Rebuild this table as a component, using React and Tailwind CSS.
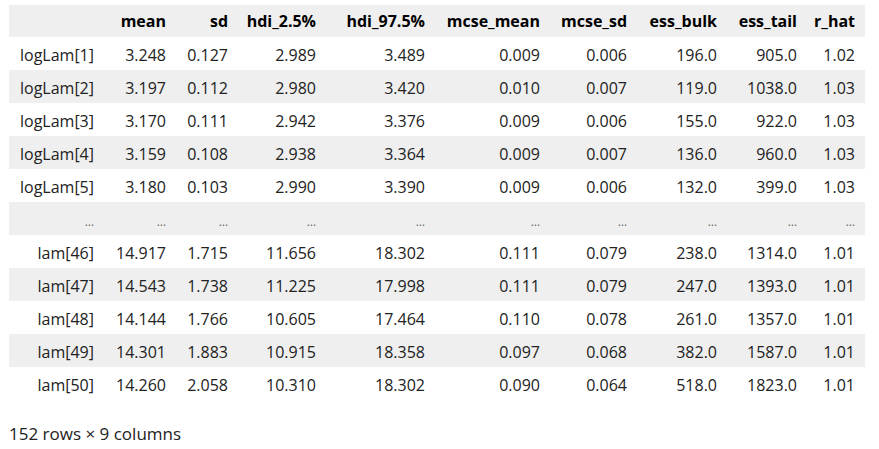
import React from "react";

const cols = ["mean", "sd", "hdi_2.5%", "hdi_97.5%", "mcse_mean", "mcse_sd", "ess_bulk", "ess_tail", "r_hat"];
const rows = [
  ["logLam[1]", "3.248", "0.127", "2.989", "3.489", "0.009", "0.006", "196.0", "905.0", "1.02"],
  ["logLam[2]", "3.197", "0.112", "2.980", "3.420", "0.010", "0.007", "119.0", "1038.0", "1.03"],
  ["logLam[3]", "3.170", "0.111", "2.942", "3.376", "0.009", "0.006", "155.0", "922.0", "1.03"],
  ["logLam[4]", "3.159", "0.108", "2.938", "3.364", "0.009", "0.007", "136.0", "960.0", "1.03"],
  ["logLam[5]", "3.180", "0.103", "2.990", "3.390", "0.009", "0.006", "132.0", "399.0", "1.03"],
  ["...", "...", "...", "...", "...", "...", "...", "...", "...", "..."],
  ["lam[46]", "14.917", "1.715", "11.656", "18.302", "0.111", "0.079", "238.0", "1314.0", "1.01"],
  ["lam[47]", "14.543", "1.738", "11.225", "17.998", "0.111", "0.079", "247.0", "1393.0", "1.01"],
  ["lam[48]", "14.144", "1.766", "10.605", "17.464", "0.110", "0.078", "261.0", "1357.0", "1.01"],
  ["lam[49]", "14.301", "1.883", "10.915", "18.358", "0.097", "0.068", "382.0", "1587.0", "1.01"],
  ["lam[50]", "14.260", "2.058", "10.310", "18.302", "0.090", "0.064", "518.0", "1823.0", "1.01"],
];

export default function App() {
  return (
    <div
      className="w-[879px] h-[449px] bg-white text-[#222] pt-[5px] pl-[9px]"
      style={{ fontFamily: '"Open Sans", "Noto Sans", sans-serif' }}
    >
      <table className="table-fixed border-collapse w-[856px] text-[16px]">
        <colgroup>
          <col className="w-[95px]" />
          <col className="w-[72px]" />
          <col className="w-[62px]" />
          <col className="w-[88px]" />
          <col className="w-[109px]" />
          <col className="w-[115px]" />
          <col className="w-[87px]" />
          <col className="w-[90px]" />
          <col className="w-[80px]" />
          <col className="w-[58px]" />
        </colgroup>
        <thead>
          <tr className="h-[32px] bg-[#efefef]">
            <th className="p-0"></th>
            {cols.map((c) => (
              <th key={c} className="p-0 pr-[10px] text-right font-bold text-black whitespace-nowrap">
                {c}
              </th>
            ))}
          </tr>
        </thead>
        <tbody>
          {rows.map((r, i) => (
            <tr key={i} className={`h-[33px] ${i % 2 === 1 ? "bg-[#efefef]" : "bg-white"}`}>
              {r.map((v, j) => (
                <td key={j} className="p-0 pr-[10px] pt-[2px] text-right whitespace-nowrap">
                  {v === "..." ? <span className="text-[12px] text-[#666]">…</span> : v}
                </td>
              ))}
            </tr>
          ))}
        </tbody>
      </table>
      <div className="mt-[21px] text-[17px]">152 rows × 9 columns</div>
    </div>
  );
}
